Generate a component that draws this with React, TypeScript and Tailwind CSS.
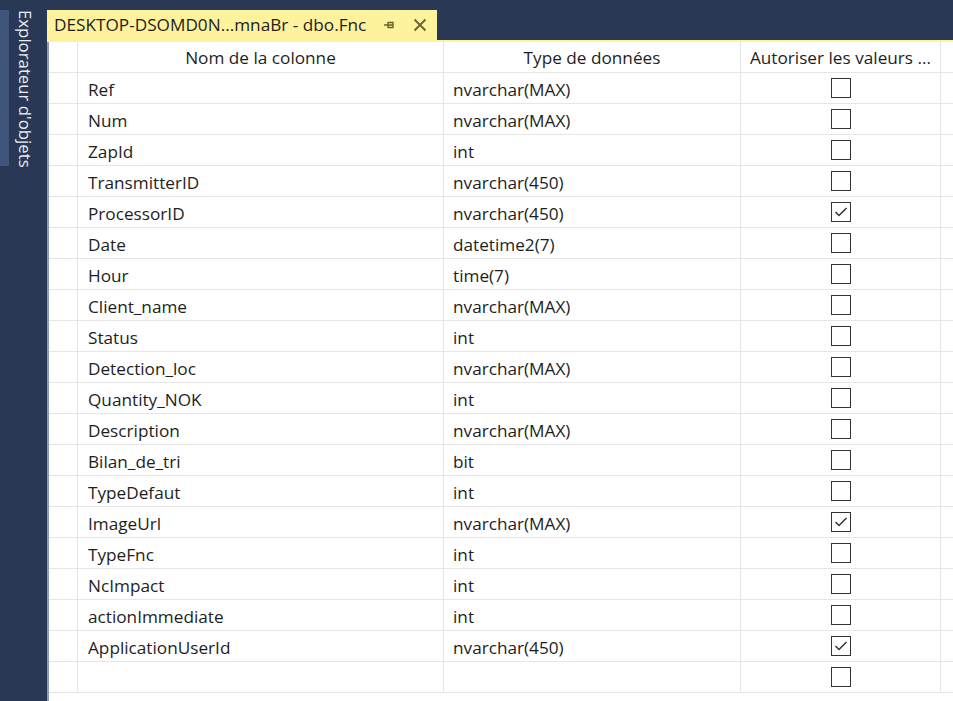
import React from "react";

const rows: [string, string, boolean][] = [
  ["Ref", "nvarchar(MAX)", false],
  ["Num", "nvarchar(MAX)", false],
  ["ZapId", "int", false],
  ["TransmitterID", "nvarchar(450)", false],
  ["ProcessorID", "nvarchar(450)", true],
  ["Date", "datetime2(7)", false],
  ["Hour", "time(7)", false],
  ["Client_name", "nvarchar(MAX)", false],
  ["Status", "int", false],
  ["Detection_loc", "nvarchar(MAX)", false],
  ["Quantity_NOK", "int", false],
  ["Description", "nvarchar(MAX)", false],
  ["Bilan_de_tri", "bit", false],
  ["TypeDefaut", "int", false],
  ["ImageUrl", "nvarchar(MAX)", true],
  ["TypeFnc", "int", false],
  ["NcImpact", "int", false],
  ["actionImmediate", "int", false],
  ["ApplicationUserId", "nvarchar(450)", true],
  ["", "", false],
];

function Check({ on }: { on: boolean }) {
  return (
    <div className="w-[20px] h-[20px] border border-[#333333] bg-white flex items-center justify-center">
      {on && (
        <svg width="16" height="14" viewBox="0 0 16 14">
          <path d="M2.5 7 L6 10.5 L13.5 3" fill="none" stroke="#333" strokeWidth="1.5" />
        </svg>
      )}
    </div>
  );
}

export default function App() {
  return (
    <div
      className="w-[953px] h-[701px] bg-[#293955] flex overflow-hidden text-[#1e1e1e]"
      style={{ fontFamily: '"Open Sans", "Noto Sans", sans-serif' }}
    >
      {/* left sidebar */}
      <div className="w-[47px] flex shrink-0">
        <div className="w-[9px] mt-[10px] h-[156px] bg-[#40547a]" />
        <div className="flex-1 pt-[10px] pl-[6px]">
          <div
            className="text-[16.8px] leading-[20px] text-[#e8ecf4] whitespace-nowrap"
            style={{ writingMode: "vertical-rl" }}
          >
            Explorateur d'objets
          </div>
        </div>
      </div>
      {/* document */}
      <div className="flex-1 flex flex-col">
        <div className="h-[10px]" />
        <div className="flex">
          <div className="h-[30px] w-[390px] bg-[#fff29d] flex items-center pl-[7px] text-[17.2px]">
            <span className="whitespace-nowrap">DESKTOP-DSOMD0N...mnaBr - dbo.Fnc</span>
            <svg className="ml-[16px]" width="14" height="14" viewBox="0 0 14 14">
              <path d="M2 7 H6 M6 4 V10 M6 4.5 H11 V9.5 H6 M6 7 H11" fill="none" stroke="#6b6330" strokeWidth="1.4" />
            </svg>
            <svg className="ml-[17px]" width="14" height="14" viewBox="0 0 14 14">
              <path d="M1.5 1.5 L12.5 12.5 M12.5 1.5 L1.5 12.5" stroke="#6b6330" strokeWidth="1.8" />
            </svg>
          </div>
        </div>
        <div className="h-[2px] bg-[#fff29d]" />
        <div className="flex-1 bg-white border-l-[2px] border-[#8d9bb5] text-[17.2px]">
          <div className="flex h-[31px] border-b border-[#e6e6e6]">
            <div className="w-[29px] border-r border-[#e6e6e6]" />
            <div className="w-[366px] border-r border-[#e6e6e6] flex items-center justify-center pt-[2px]">Nom de la colonne</div>
            <div className="w-[297px] border-r border-[#e6e6e6] flex items-center justify-center pt-[2px]">Type de données</div>
            <div className="w-[200px] border-r border-[#e6e6e6] flex items-center justify-center whitespace-nowrap pt-[2px]">Autoriser les valeurs ...</div>
          </div>
          {rows.map(([n, t, c], i) => (
            <div key={i} className="flex h-[31px] border-b border-[#e6e6e6]">
              <div className="w-[29px] border-r border-[#e6e6e6]" />
              <div className="w-[366px] border-r border-[#e6e6e6] flex items-center pl-[10px] pt-[3px]">{n}</div>
              <div className="w-[297px] border-r border-[#e6e6e6] flex items-center pl-[9px] pt-[3px]">{t}</div>
              <div className="w-[200px] border-r border-[#e6e6e6] flex items-center justify-center">
                <Check on={c} />
              </div>
            </div>
          ))}
        </div>
      </div>
    </div>
  );
}
